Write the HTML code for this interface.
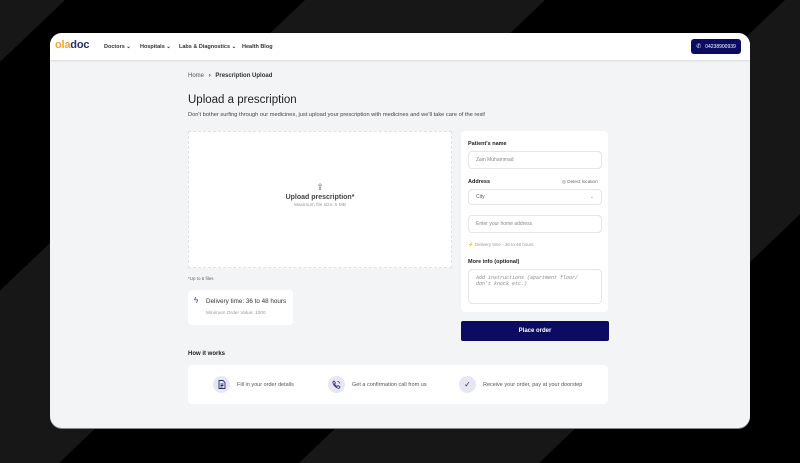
<!DOCTYPE html>
<html><head><meta charset="utf-8"><style>
*{margin:0;padding:0;box-sizing:border-box}
body{width:800px;height:463px;overflow:hidden;background:#000;font-family:"Liberation Sans",sans-serif;position:relative}
.a{position:absolute}
.card{left:50px;top:33px;width:700px;height:395px;border-radius:12px;background:#f3f4f6;overflow:hidden;box-shadow:0 1px 0 #888}
.hdr{left:0;top:0;width:700px;height:27px;background:#fff;box-shadow:0 1px 2px rgba(0,0,0,.1)}
.nav{font-size:5.5px;color:#333;font-weight:bold;top:11px}
.t{color:#333}
.in{background:#fff;border:1px solid #e3e5ea;border-radius:4px;font-size:5px;color:#888;padding-left:7px;display:flex;align-items:center}
.lbl{font-size:5.5px;font-weight:bold;color:#222}
.ic{width:17px;height:17px;border-radius:50%;background:#e6e7f3;display:flex;align-items:center;justify-content:center}
.st{font-size:5.5px;color:#555}
</style></head><body>
<svg class="a" style="left:0;top:0" width="800" height="463">
<polygon points="-175,0 65,0 -421,463 -661,463" fill="#171717"/>
<polygon points="305,0 545,0 59,463 -181,463" fill="#171717"/>
<polygon points="785,0 1025,0 539,463 299,463" fill="#171717"/>
</svg>
<div class="a card">
 <div class="a hdr">
  <div class="a" style="left:5px;top:6px;font-size:11px;font-weight:bold;letter-spacing:-0.2px"><span style="color:#f5a623">ola</span><span style="color:#2a2d6e">doc</span></div>
  <div class="a nav" style="left:54px">Doctors ⌄</div>
  <div class="a nav" style="left:90px">Hospitals ⌄</div>
  <div class="a nav" style="left:129px">Labs &amp; Diagnostics ⌄</div>
  <div class="a nav" style="left:192px">Health Blog</div>
  <div class="a" style="left:641px;top:6px;width:50px;height:15px;background:#0b0b62;border-radius:3px;color:#fff;font-size:5px;display:flex;align-items:center;justify-content:center;gap:4px"><span style="font-size:6px">✆</span>04238900939</div>
 </div>
 <div class="a t" style="left:138px;top:40px;font-size:6px"><span style="color:#555">Home</span> <b style="margin:0 3px">›</b> <b>Prescription Upload</b></div>
 <div class="a" style="left:138px;top:61px;font-size:11.5px;color:#222">Upload a prescription</div>
 <div class="a" style="left:138px;top:79px;font-size:5.7px;color:#444">Don't bother surfing through our medicines, just upload your prescription with medicines and we'll take care of the rest!</div>
 <div class="a" style="left:138px;top:98px;width:264px;height:137px;background:#fff;border:1px dashed #e0e2e6;text-align:center">
  <div style="margin-top:50px;font-size:9px;color:#666">⇪</div>
  <div style="font-size:7px;font-weight:bold;color:#444;margin-top:1px">Upload prescription*</div>
  <div style="font-size:4.8px;color:#999;margin-top:2px">Maximum file size: 5 MB</div>
 </div>
 <div class="a" style="left:138px;top:243px;font-size:4.5px;color:#666">*Up to 5 files</div>
 <div class="a" style="left:138px;top:257px;width:105px;height:35px;background:#fff;border-radius:4px">
  <div class="a" style="left:6px;top:6px;font-size:8px;color:#2a2d8e">ϟ</div>
  <div class="a" style="left:18px;top:8px;font-size:6.3px;color:#333">Delivery time: 36 to 48 hours</div>
  <div class="a" style="left:18px;top:21px;font-size:4.8px;color:#999">Minimum Order Value: 1000</div>
 </div>
 <div class="a" style="left:411px;top:98px;width:147px;height:181px;background:#fff;border-radius:4px">
  <div class="a lbl" style="left:7px;top:10px">Patient's name</div>
  <div class="a in" style="left:7px;top:20px;width:134px;height:18px">Zain Muhammad</div>
  <div class="a lbl" style="left:7px;top:48px">Address</div>
  <div class="a" style="left:101px;top:48px;font-size:4.6px;color:#666">◎ Detect location</div>
  <div class="a in" style="left:7px;top:58px;width:134px;height:16px;color:#555">City<span style="position:absolute;right:7px;color:#999">⌄</span></div>
  <div class="a in" style="left:7px;top:84px;width:134px;height:18px">Enter your home address</div>
  <div class="a" style="left:7px;top:111px;font-size:4.5px;color:#999"><span style="color:#f5c000">⚡</span> Delivery time - 36 to 48 hours</div>
  <div class="a lbl" style="left:7px;top:128px">More info (optional)</div>
  <div class="a in" style="left:7px;top:138px;width:134px;height:35px;align-items:flex-start;padding-top:5px;font-family:'Liberation Mono',monospace;font-style:italic;font-size:5px;color:#888;line-height:6px">Add instructions (apartment floor/<br>don't knock etc.)</div>
 </div>
 <div class="a" style="left:411px;top:288px;width:148px;height:20px;background:#0b0b62;border-radius:2px;color:#fff;font-size:6px;font-weight:bold;display:flex;align-items:center;justify-content:center">Place order</div>
 <div class="a lbl" style="left:138px;top:318px;font-size:6px">How it works</div>
 <div class="a" style="left:138px;top:332px;width:420px;height:39px;background:#fff;border-radius:4px">
  <div class="a ic" style="left:25px;top:11px"><svg width="8" height="9" viewBox="0 0 8 9"><path d="M1 .5h4l2 2v6H1z M2.5 4h3M2.5 5.5h3M2.5 7h2" fill="none" stroke="#2a2d6e" stroke-width=".9"/></svg></div>
  <div class="a st" style="left:49px;top:17px">Fill in your order details</div>
  <div class="a ic" style="left:140px;top:11px"><svg width="9" height="9" viewBox="0 0 9 9"><path d="M2 1l1.5 2-1 1c.7 1.3 1.5 2.1 2.5 2.5l1-1 2 1.5-1 1.5C4 8 1 5 .8 2z M5.5 1.5a2 2 0 012 2" fill="none" stroke="#2a2d6e" stroke-width=".8"/></svg></div>
  <div class="a st" style="left:164px;top:17px">Get a confirmation call from us</div>
  <div class="a ic" style="left:271px;top:11px"><span style="font-size:8px;color:#2a2d6e">✓</span></div>
  <div class="a st" style="left:295px;top:17px">Receive your order, pay at your doorstep</div>
 </div>
</div>
</body></html>
